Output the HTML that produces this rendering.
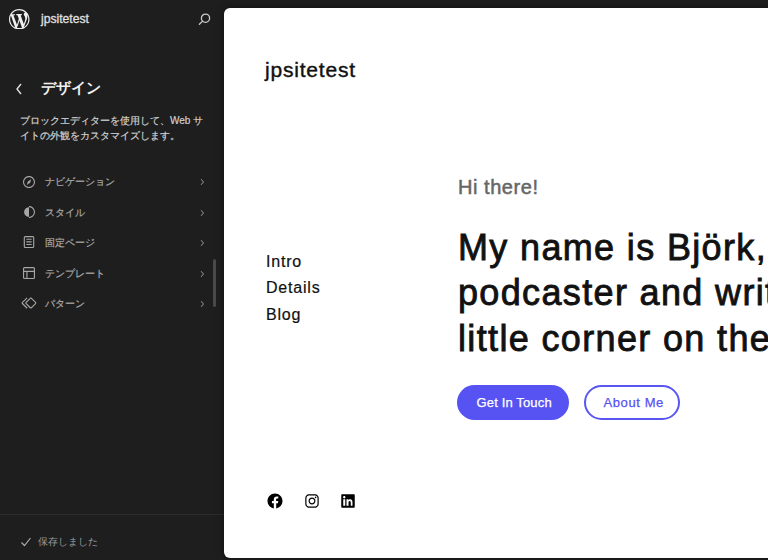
<!DOCTYPE html>
<html><head><meta charset="utf-8">
<style>
*{box-sizing:border-box;margin:0;padding:0}
html,body{width:768px;height:560px;overflow:hidden;background:#1e1e1e;font-family:"Liberation Sans",sans-serif}
.abs{position:absolute}
.side{position:absolute;left:0;top:0;width:224px;height:560px;background:#1e1e1e;color:#e0e0e0}
.t{position:absolute;white-space:nowrap;line-height:1}
.ic{fill:#a6a6a6}.ch{fill:#9a9a9a}.mi{left:44.5px;font-size:9.6px;color:#a8a8a8;margin-top:1.2px;-webkit-text-stroke:0.2px #a8a8a8}
.canvas{position:absolute;left:224px;top:8px;width:560px;height:550px;background:#fff;border-radius:6px;box-shadow:0 0 8px rgba(0,0,0,.45)}
</style></head><body>
<div class="side">
  <!-- WP logo -->
  <svg class="abs" style="left:9.4px;top:8.7px" width="20.5" height="20.5" viewBox="0 0 20 20"><path fill="#f0f0f0" d="M20 10c0-5.51-4.49-10-10-10C4.48 0 0 4.49 0 10c0 5.52 4.48 10 10 10 5.51 0 10-4.48 10-10zM7.78 15.37L4.37 6.22c.55-.02 1.17-.08 1.17-.08.5-.06.44-1.13-.06-1.11 0 0-1.45.11-2.37.11-.18 0-.37 0-.58-.01C4.12 2.69 6.87 1.11 10 1.11c2.33 0 4.45.87 6.05 2.34-.68-.11-1.65.39-1.65 1.58 0 .74.45 1.36.9 2.1.35.61.55 1.36.55 2.46 0 1.49-1.4 5-1.4 5l-3.03-8.37c.54-.02.82-.17.82-.17.5-.05.44-1.25-.06-1.22 0 0-1.44.12-2.38.12-.87 0-2.33-.12-2.33-.12-.5-.03-.56 1.2-.06 1.22l.92.08 1.26 3.41zM17.41 10c.24-.64.74-1.87.43-4.25.7 1.29 1.05 2.71 1.05 4.25 0 3.29-1.73 6.24-4.4 7.78.97-2.59 1.94-5.2 2.92-7.78zM6.1 18.09C3.12 16.65 1.11 13.53 1.11 10c0-1.3.23-2.48.72-3.59.84 2.31 1.67 4.63 2.51 6.95.59 1.57 1.17 3.15 1.76 4.73zm4.04-6.88l2.57 6.97c-.85.3-1.76.46-2.71.46-.8 0-1.57-.11-2.29-.33 1.03-2.36 1.94-4.74 2.43-7.1z"/></svg>
  <div class="t" style="left:41px;top:11.5px;font-size:13.5px;color:#e0e0e0;-webkit-text-stroke:0.3px #e0e0e0;transform:scaleX(0.9);transform-origin:0 0">jpsitetest</div>
  <!-- search -->
  <svg class="abs" style="left:196px;top:11px" width="18" height="18" viewBox="0 0 18 18"><circle cx="9.5" cy="7.2" r="4.1" fill="none" stroke="#ccc" stroke-width="1.3"/><path d="M6.6 10.1L3.4 13.3" stroke="#ccc" stroke-width="1.3" stroke-linecap="round"/></svg>

  <!-- back chevron -->
  <svg class="abs" style="left:14px;top:82px" width="10" height="14" viewBox="0 0 10 14"><path d="M7 2L3 7l4 5" fill="none" stroke="#e0e0e0" stroke-width="1.4"/></svg>
  <div class="t" style="left:41px;top:80px;font-size:15px;font-weight:bold;color:#f0f0f0">デザイン</div>
  <div class="t" style="left:20px;top:112.5px;font-size:10px;line-height:15.2px;color:#d0d0d0;-webkit-text-stroke:0.2px #d0d0d0;">ブロックエディターを使用して、Web サ<br>イトの外観をカスタマイズします。</div>

  
  <svg class="abs ic" style="left:20px;top:172.7px" width="18" height="18" viewBox="0 0 24 24"><path d="M12 4c-4.4 0-8 3.6-8 8s3.6 8 8 8 8-3.6 8-8-3.6-8-8-8zm0 14.5c-3.6 0-6.5-2.9-6.5-6.5S8.4 5.5 12 5.5s6.5 2.9 6.5 6.5-2.9 6.5-6.5 6.5zM9 16l4.5-3L15 8.4l-4.5 3L9 16z"/></svg>
  <div class="t mi" style="top:176px">ナビゲーション</div>
  <svg class="abs ch" style="left:196px;top:176px" width="12" height="12" viewBox="0 0 24 24"><path d="M10.6 6L9.4 7l4.6 5-4.6 5 1.2 1 5.4-6z"/></svg>

  <svg class="abs ic" style="left:20px;top:203px" width="18" height="18" viewBox="0 0 24 24"><path d="M12 4c-4.4 0-8 3.6-8 8s3.6 8 8 8 8-3.6 8-8-3.6-8-8-8zm0 14.5c-3.6 0-6.5-2.9-6.5-6.5S8.4 5.5 12 5.5s6.5 2.9 6.5 6.5-2.9 6.5-6.5 6.5zM12 4v16c-4.4 0-8-3.6-8-8s3.6-8 8-8z"/></svg>
  <div class="t mi" style="top:206.5px">スタイル</div>
  <svg class="abs ch" style="left:196px;top:206.5px" width="12" height="12" viewBox="0 0 24 24"><path d="M10.6 6L9.4 7l4.6 5-4.6 5 1.2 1 5.4-6z"/></svg>

  <svg class="abs ic" style="left:20px;top:233.4px" width="18" height="18" viewBox="0 0 24 24"><path d="M15.5 7.5h-7V9h7V7.5Zm-7 3.5h7v1.5h-7V11Zm7 3.5h-7V16h7v-1.5Z"/><path d="M17 4H7a2 2 0 0 0-2 2v12a2 2 0 0 0 2 2h10a2 2 0 0 0 2-2V6a2 2 0 0 0-2-2ZM7 5.5h10a.5.5 0 0 1 .5.5v12a.5.5 0 0 1-.5.5H7a.5.5 0 0 1-.5-.5V6a.5.5 0 0 1 .5-.5Z"/></svg>
  <div class="t mi" style="top:237px">固定ページ</div>
  <svg class="abs ch" style="left:196px;top:237px" width="12" height="12" viewBox="0 0 24 24"><path d="M10.6 6L9.4 7l4.6 5-4.6 5 1.2 1 5.4-6z"/></svg>

  <svg class="abs ic" style="left:20px;top:263.8px" width="18" height="18" viewBox="0 0 24 24"><path d="M18 5.5H6a.5.5 0 00-.5.5v3h13V6a.5.5 0 00-.5-.5zm.5 5H10v8h8a.5.5 0 00.5-.5v-7.5zm-10 0h-3V18a.5.5 0 00.5.5h2.5v-8zM6 4h12a2 2 0 012 2v12a2 2 0 01-2 2H6a2 2 0 01-2-2V6a2 2 0 012-2z"/></svg>
  <div class="t mi" style="top:267.5px">テンプレート</div>
  <svg class="abs ch" style="left:196px;top:267.5px" width="12" height="12" viewBox="0 0 24 24"><path d="M10.6 6L9.4 7l4.6 5-4.6 5 1.2 1 5.4-6z"/></svg>

  <svg class="abs ic" style="left:20px;top:294.2px" width="18" height="18" viewBox="0 0 24 24"><path d="M21.3 10.8l-5.6-5.6c-.7-.7-1.800-.7-2.5 0l-5.6 5.6c-.7.7-.7 1.8 0 2.5l5.6 5.6c.3.3.8.5 1.2.5s.9-.2 1.2-.5l5.600-5.6c.8-.7.8-1.9.1-2.5zm-1 1.4l-5.6 5.6c-.1.1-.3.1-.4 0l-5.6-5.6c-.1-.1-.1-.3 0-.4l5.6-5.6s.1-.1.2-.1.1 0 .2.1l5.6 5.6c.1.1.1.3 0 .4zm-16.6-.4L10 5.5l-1-1-6.3 6.3c-.7.7-.7 1.8 0 2.5L9 19.5l1.1-1.1-6.3-6.3c-.2 0-.2-.2-.1-.3z"/></svg>
  <div class="t mi" style="top:298px">パターン</div>
  <svg class="abs ch" style="left:196px;top:298px" width="12" height="12" viewBox="0 0 24 24"><path d="M10.6 6L9.4 7l4.6 5-4.6 5 1.2 1 5.4-6z"/></svg>


  <!-- scrollbar -->
  <div class="abs" style="left:213px;top:259px;width:3px;height:48px;border-radius:2px;background:#4a4a4a"></div>

  <!-- footer -->
  <div class="abs" style="left:0;top:514px;width:224px;height:1px;background:#2c2c2c"></div>
  <svg class="abs" style="left:20px;top:536px" width="12" height="12" viewBox="0 0 12 12"><path d="M1.5 6.5l3 3 6-7.5" fill="none" stroke="#aaa" stroke-width="1.2"/></svg>
  <div class="t" style="left:38px;top:537px;font-size:10px;color:#9a9a9a">保存しました</div>
</div>

<div class="canvas">
  <div class="t" style="left:41px;top:51px;font-size:21px;color:#111;letter-spacing:0.8px;-webkit-text-stroke:0.4px #111">jpsitetest</div>
  <div class="t" style="left:42px;top:240.5px;font-size:16px;line-height:26.5px;color:#111;white-space:pre;letter-spacing:0.8px;-webkit-text-stroke:0.2px #111">Intro
Details
Blog</div>
  <div class="t" style="left:234px;top:168.7px;font-size:20px;color:#666;letter-spacing:0.55px;-webkit-text-stroke:0.5px #666">Hi there!</div>
  <div class="t" style="left:234px;top:216.7px;font-size:36px;line-height:45.8px;color:#111;white-space:pre;-webkit-text-stroke:0.85px #111;letter-spacing:1.35px">My name is Björk, a
podcaster and writer
little corner on the web</div>
  <div class="abs" style="left:233px;top:377px;width:112px;height:35px;border-radius:18px;background:#5752f2"></div>
  <div class="t" style="left:252.5px;top:388px;font-size:13px;color:#fff;letter-spacing:0.15px;-webkit-text-stroke:0.25px #fff">Get In Touch</div>
  <div class="abs" style="left:360px;top:377px;width:96px;height:35px;border-radius:18px;border:2px solid #5a56f3"></div>
  <div class="t" style="left:379.5px;top:388px;font-size:13px;color:#5752f2;letter-spacing:0.6px;-webkit-text-stroke:0.25px #5752f2">About Me</div>
  <svg class="abs" style="left:42px;top:483.7px" width="18" height="18" viewBox="0 0 24 24"><path d="M12 2C6.5 2 2 6.5 2 12c0 5 3.7 9.1 8.4 9.9v-7H7.900V12h2.5V9.8c0-2.5 1.5-3.9 3.8-3.9 1.1 0 2.2.2 2.2.2v2.5h-1.3c-1.2 0-1.6.8-1.6 1.600V12h2.8l-.4 2.9h-2.3v7C18.3 21.1 22 17 22 12c0-5.500-4.5-10-10-10z"/></svg>
  <svg class="abs" style="left:78.8px;top:483.7px" width="18" height="18" viewBox="0 0 24 24"><path d="M12,4.622c2.403,0,2.688,0.009,3.637,0.052c0.877,0.04,1.354,0.187,1.671,0.31c0.42,0.163,0.72,0.358,1.035,0.673 c0.315,0.315,0.51,0.615,0.673,1.035c0.123,0.317,0.27,0.794,0.31,1.671c0.043,0.949,0.052,1.234,0.052,3.637 s-0.009,2.688-0.052,3.637c-0.04,0.877-0.187,1.354-0.31,1.671c-0.163,0.42-0.358,0.72-0.673,1.035 c-0.315,0.315-0.615,0.51-1.035,0.673c-0.317,0.123-0.794,0.27-1.671,0.31c-0.949,0.043-1.233,0.052-3.637,0.052 s-2.688-0.009-3.637-0.052c-0.877-0.04-1.354-0.187-1.671-0.31c-0.42-0.163-0.72-0.358-1.035-0.673 c-0.315-0.315-0.51-0.615-0.673-1.035c-0.123-0.317-0.27-0.794-0.31-1.671C4.631,14.688,4.622,14.403,4.622,12 s0.009-2.688,0.052-3.637c0.04-0.877,0.187-1.354,0.31-1.671c0.163-0.42,0.358-0.72,0.673-1.035 c0.315-0.315,0.615-0.51,1.035-0.673c0.317-0.123,0.794-0.27,1.671-0.31C9.312,4.631,9.597,4.622,12,4.622 M12,3 C9.556,3,9.249,3.010,8.289,3.054C7.331,3.098,6.677,3.25,6.105,3.472C5.513,3.702,5.011,4.01,4.511,4.511 c-0.5,0.5-0.808,1.002-1.038,1.594C3.25,6.677,3.098,7.331,3.054,8.289C3.01,9.249,3,9.556,3,12c0,2.444,0.01,2.751,0.054,3.711 c0.044,0.958,0.196,1.612,0.418,2.185c0.23,0.592,0.538,1.094,1.038,1.594c0.5,0.5,1.002,0.808,1.594,1.038 c0.572,0.222,1.227,0.375,2.185,0.418C9.249,20.99,9.556,21,12,21s2.751-0.01,3.711-0.054c0.958-0.044,1.612-0.196,2.185-0.418 c0.592-0.23,1.094-0.538,1.594-1.038c0.5-0.5,0.808-1.002,1.038-1.594c0.222-0.572,0.375-1.227,0.418-2.185 C20.99,14.751,21,14.444,21,12s-0.01-2.751-0.054-3.711c-0.044-0.958-0.196-1.612-0.418-2.185c-0.23-0.592-0.538-1.094-1.038-1.594 c-0.5-0.5-1.002-0.808-1.594-1.038c-0.572-0.222-1.227-0.375-2.185-0.418C14.751,3.01,14.444,3,12,3L12,3z M12,7.378 c-2.552,0-4.622,2.069-4.622,4.622S9.448,16.622,12,16.622s4.622-2.069,4.622-4.622S14.552,7.378,12,7.378z M12,15 c-1.657,0-3-1.343-3-3s1.343-3,3-3s3,1.343,3,3S13.657,15,12,15z M16.804,6.116c-0.596,0-1.08,0.484-1.08,1.08 s0.484,1.08,1.08,1.08c0.596,0,1.08-0.484,1.08-1.08S17.401,6.116,16.804,6.116z"/></svg>
  <svg class="abs" style="left:115.25px;top:483.7px" width="18" height="18" viewBox="0 0 24 24"><path d="M19.7,3H4.3C3.582,3,3,3.582,3,4.3v15.4C3,20.418,3.582,21,4.3,21h15.4c0.718,0,1.3-0.582,1.3-1.3V4.3 C21,3.582,20.418,3,19.7,3z M8.339,18.338H5.667v-8.59h2.672V18.338z M7.004,8.574c-0.857,0-1.549-0.694-1.549-1.548 c0-0.855,0.691-1.548,1.549-1.548c0.854,0,1.547,0.694,1.547,1.548C8.551,7.881,7.858,8.574,7.004,8.574z M18.339,18.338h-2.669 v-4.177c0-0.996-0.017-2.278-1.387-2.278c-1.389,0-1.601,1.086-1.601,2.206v4.249h-2.667v-8.590h2.559v1.174h0.037 c0.356-0.71,1.227-1.387,2.147-1.387c2.704,0,3.203,1.778,3.203,4.092V18.338z"/></svg>
</div>
</body></html>
